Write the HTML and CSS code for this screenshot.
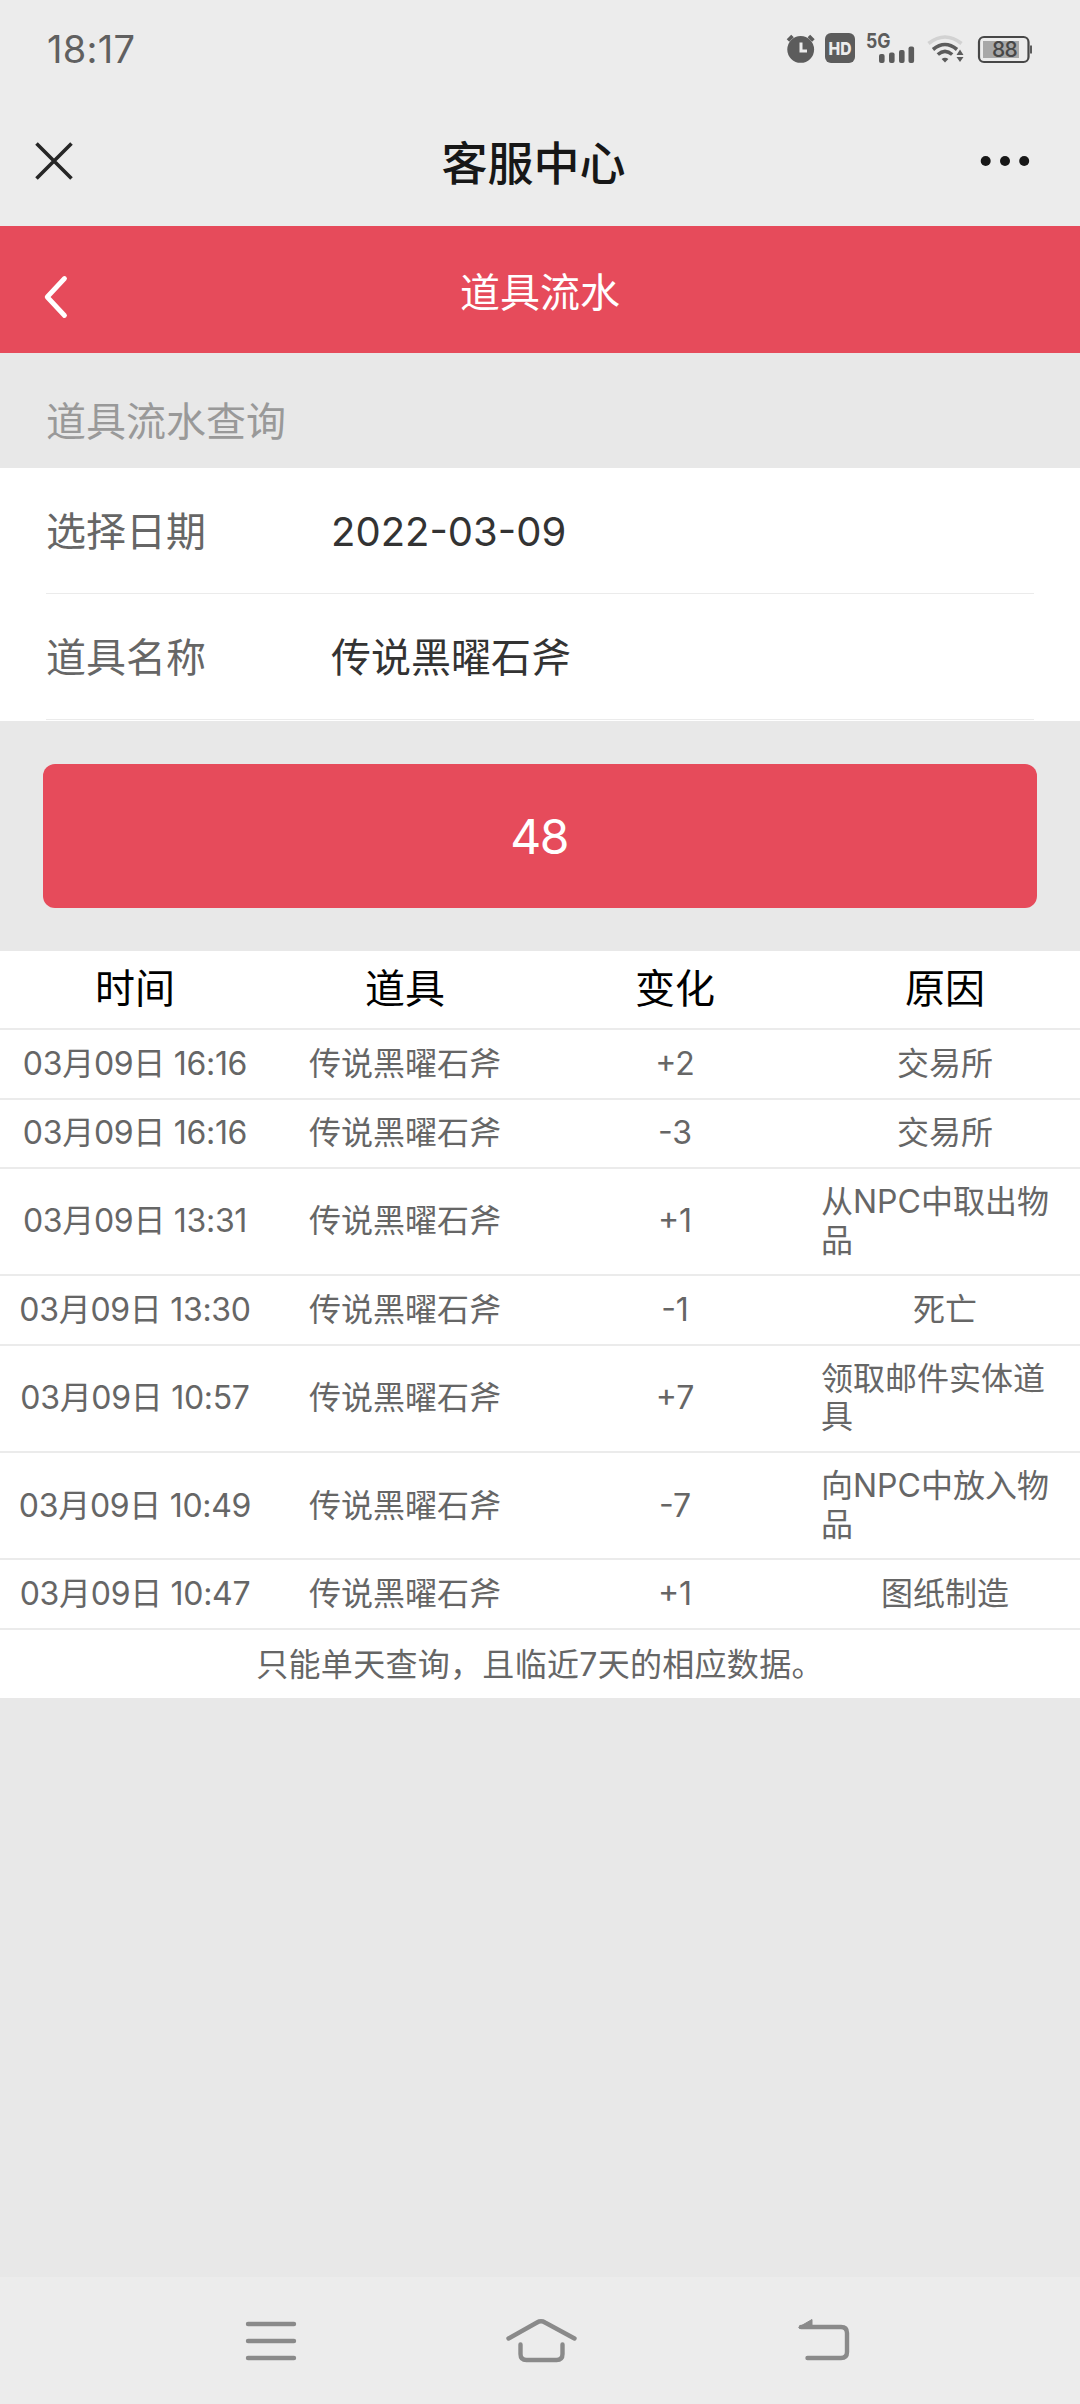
FILE: index.html
```html
<!DOCTYPE html>
<html lang="zh-CN">
<head>
<meta charset="utf-8">
<title>客服中心</title>
<link rel="stylesheet" href="styles.css">
</head>
<body>
<div class="status-bar">
  <span class="clock">18:17</span>
  <svg class="status-icons" width="260" height="40" viewBox="780 28 260 40">
    <g fill="#5c5c5c">
      <circle cx="800.7" cy="49.4" r="13.4"/>
      <path d="M788 40.500L792.500 36M808.900 36L813.400 40.500" stroke="#5c5c5c" stroke-width="3.600"/>
      <path d="M801 42.500V51H807" fill="none" stroke="#ececec" stroke-width="3"/>
      <rect x="825" y="33" width="30" height="30" rx="6"/>
      <rect x="879" y="54" width="5.600" height="9" rx="2"/>
      <rect x="889" y="52.600" width="5.600" height="10.400" rx="2"/>
      <rect x="899" y="50" width="5.600" height="13" rx="2"/>
      <rect x="908.500" y="46.600" width="5.600" height="16.400" rx="2"/>
      <path d="M941.600 59Q945 56.500 948.400 59L945 62.600Z"/>
      <path d="M960 49.500L963.500 55H956.500ZM960 62L963.500 57H956.500Z"/>
      <rect x="1030" y="45.500" width="2" height="8"/>
    </g>
    <g fill="none" stroke="#5c5c5c" stroke-width="3.600">
      <path d="M933 49.500Q945 39.500 957 49.500"/>
      <path d="M937.800 54.500Q945 48.300 952.200 54.500"/>
      <path d="M928.500 43.500Q945 30.500 961.500 43.500" stroke="#d2d2d2"/>
    </g>
    <rect x="979" y="37" width="49.500" height="25" rx="5" fill="none" stroke="#474747" stroke-width="2.200"/>
    <rect x="983" y="41" width="36" height="17" fill="#a8a8a8"/>
    <text class="badge-hd" x="840" y="54.500" text-anchor="middle" textLength="23" lengthAdjust="spacingAndGlyphs">HD</text>
    <text class="net" x="866" y="47.500" textLength="24.500" lengthAdjust="spacingAndGlyphs">5G</text>
    <text class="charge" x="1004.500" y="57" text-anchor="middle">88</text>
  </svg>
</div>
<header class="app-bar">
  <svg width="40" height="40" viewBox="0 0 40 40"><path d="M2.500 2.500L37.500 37.500M37.500 2.500L2.500 37.500" stroke="#262626" stroke-width="3.600" fill="none"/></svg>
  <h1 class="app-title">客服中心</h1>
  <svg width="50" height="12" viewBox="0 0 50 12" fill="#171717"><circle cx="5.700" cy="6" r="5"/><circle cx="25" cy="6" r="5"/><circle cx="44.200" cy="6" r="5"/></svg>
</header>
<nav class="page-bar">
  <svg width="28" height="46" viewBox="0 0 28 46"><path d="M22.500 4.500L5.200 23L22.500 41.500" fill="none" stroke="#fff" stroke-width="4.800" stroke-linecap="round" stroke-linejoin="round"/></svg>
  <h2 class="page-title">道具流水</h2>
</nav>
<main class="content">
  <div class="section-label">道具流水查询</div>
  <div class="form">
    <div class="field"><span class="field-name">选择日期</span><span class="field-value">2022-03-09</span></div>
    <div class="field"><span class="field-name">道具名称</span><span class="field-value">传说黑曜石斧</span></div>
  </div>
  <button class="query">48</button>
  <div class="log">
    <div class="row head"><span>时间</span><span>道具</span><span>变化</span><span>原因</span></div>
    <div class="row"><span class="time">03月09日 16:16</span><span>传说黑曜石斧</span><span>+2</span><span>交易所</span></div>
    <div class="row"><span class="time">03月09日 16:16</span><span>传说黑曜石斧</span><span>-3</span><span>交易所</span></div>
    <div class="row tall"><span class="time">03月09日 13:31</span><span>传说黑曜石斧</span><span>+1</span><span>从NPC中取出物品</span></div>
    <div class="row"><span class="time">03月09日 13:30</span><span>传说黑曜石斧</span><span>-1</span><span>死亡</span></div>
    <div class="row tall"><span class="time">03月09日 10:57</span><span>传说黑曜石斧</span><span>+7</span><span>领取邮件实体道具</span></div>
    <div class="row tall"><span class="time">03月09日 10:49</span><span>传说黑曜石斧</span><span>-7</span><span>向NPC中放入物品</span></div>
    <div class="row"><span class="time">03月09日 10:47</span><span>传说黑曜石斧</span><span>+1</span><span>图纸制造</span></div>
    <div class="note">只能单天查询，且临近7天的相应数据。</div>
  </div>
</main>
<footer class="system-nav">
  <svg width="80" height="60" viewBox="0 0 80 60"><path d="M17 13H63M17 30H63M17 47H63"/></svg>
  <svg width="80" height="60" viewBox="0 0 80 60"><path d="M7.500 27.500L36 11.500Q40 9.200 44 11.500L73.500 27.500M19.500 33.500V43Q19.500 49 25.500 49H55.500Q61.500 49 61.500 43V33.500"/></svg>
  <svg width="80" height="60" viewBox="0 0 80 60"><path d="M30 16H70Q76 16 76 22V41Q76 47 70 47H36.500"/><path class="solid" d="M28 16L41 8.500V17.500H29Z"/></svg>
</footer>
</body>
</html>
```
FILE: styles.css
```css
* {
  box-sizing: border-box;
}

body {
  margin: 0;
  width: 1080px;
  height: 2404px;
  display: flex;
  flex-direction: column;
  background: #e8e8e8;
  font-family: Inter, "Noto Sans CJK SC", sans-serif;
  color: #666;
}

h1,
h2 {
  margin: 0;
}

.status-bar {
  height: 96px;
  padding: 0 40px 0 47px;
  display: flex;
  justify-content: space-between;
  align-items: center;
  background: #ececec;
}

.clock {
  padding-top: 1px;
  font-size: 38px;
  line-height: 40px;
  letter-spacing: 0.3px;
  color: #606060;
}

.badge-hd {
  font: 800 18px Inter, sans-serif;
  fill: #ececec;
}

.net {
  font: 700 20px Inter, sans-serif;
  fill: #5c5c5c;
}

.charge {
  font: 500 21px Inter, sans-serif;
  letter-spacing: -0.8px;
  fill: #474747;
}

.app-bar {
  height: 130px;
  padding: 0 50px 0 34px;
  display: grid;
  grid-template-columns: 53px 1fr 50px;
  align-items: center;
  background: #ececec;
}

.app-title {
  padding-top: 4px;
  font-size: 46px;
  line-height: 60px;
  font-weight: 500;
  text-align: center;
  color: #171717;
}

.page-bar {
  height: 127px;
  padding: 0 42px;
  display: grid;
  grid-template-columns: 28px 1fr 28px;
  align-items: center;
  background: #e64b5b;
}

.page-bar svg {
  margin-top: 14px;
}

.page-title {
  padding-top: 6px;
  font-size: 40px;
  line-height: 60px;
  font-weight: 400;
  text-align: center;
  color: #fff;
}

.content {
  flex: 1;
}

.section-label {
  height: 115px;
  padding: 39px 46px 0;
  font-size: 40px;
  line-height: 60px;
  color: #999;
}

.form {
  height: 253px;
  padding: 0 46px;
  background: #fff;
}

.field {
  height: 126px;
  padding-top: 2px;
  display: grid;
  grid-template-columns: 285px 1fr;
  align-items: center;
  border-bottom: 1px solid #ebebeb;
  font-size: 40px;
  line-height: 60px;
}

.field-value {
  color: #333;
}

.query {
  display: block;
  width: 994px;
  height: 144px;
  margin: 43px auto;
  padding: 2px 2px 0 0;
  border: 0;
  border-radius: 12px;
  background: #e64b5b;
  color: #fff;
  font: 400 48px/60px Inter, sans-serif;
  letter-spacing: -1.5px;
}

.log {
  background: #fff;
}

.row {
  height: 69.5px;
  display: grid;
  grid-template-columns: repeat(4, 1fr);
  align-items: center;
  justify-items: center;
  border-bottom: 2px solid #ebebeb;
  font-size: 32px;
  line-height: 38.5px;
}

.row span {
  padding: 0 11px;
}

.row .time {
  letter-spacing: -0.3px;
}

.row.tall {
  height: 107.33px;
}

.row.head {
  height: 79px;
  font-size: 40px;
  color: #000;
}

.note {
  height: 68px;
  padding-top: 1px;
  font-size: 32px;
  line-height: 68px;
  letter-spacing: 0.3px;
  text-align: center;
}

.system-nav {
  height: 127px;
  padding: 34px 134px 0 136px;
  display: grid;
  grid-template-columns: repeat(3, 270px);
  justify-items: center;
  align-items: start;
  background: #ececec;
}

.system-nav path {
  fill: none;
  stroke: #8a8a8a;
  stroke-width: 4.400;
  stroke-linecap: round;
  stroke-linejoin: round;
}

.system-nav .solid {
  fill: #8a8a8a;
  stroke-width: 1;
}
```
